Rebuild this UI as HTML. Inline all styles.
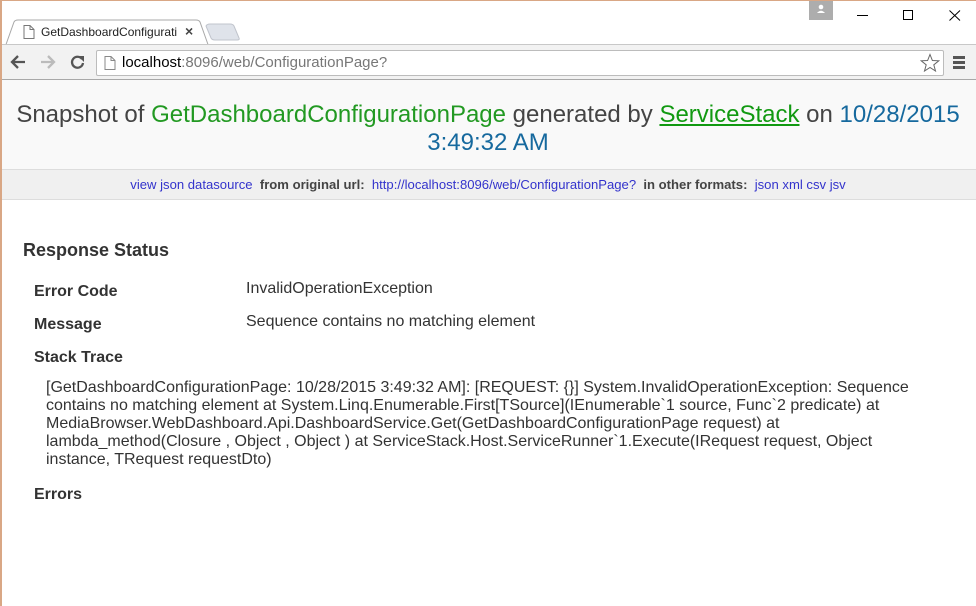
<!DOCTYPE html>
<html><head><meta charset="utf-8"><style>
*{margin:0;padding:0;box-sizing:border-box}
body{width:976px;height:606px;overflow:hidden;background:#fff;font-family:"Liberation Sans",Arial,sans-serif;position:relative;color:#333}
.abs{position:absolute}
#frame{position:absolute;left:0;top:0;width:976px;height:606px;border-top:1px solid #d9a785;border-left:2px solid #d9a785;pointer-events:none}
#chrome{position:absolute;left:0;top:0;width:976px;height:80px;background:#fff}
#tb{position:absolute;left:0;top:44px;width:976px;height:36px;background:#f2f2f2;border-top:1px solid #c8c8c8;border-bottom:1px solid #a8a8a8}
#url{position:absolute;left:96px;top:50px;width:848px;height:26px;background:#fff;border:1px solid #bcbcbc;border-radius:2px}
#hdr{position:absolute;left:0;top:80px;width:976px;height:89px;background:#f9f9f9;text-align:center;font-size:24px;line-height:28px;color:#444;padding-top:21px;white-space:nowrap}
#bar{position:absolute;left:0;top:169px;width:976px;height:31px;background:#f0f0f0;border-top:1px solid #ddd;border-bottom:1px solid #ddd;text-align:center;font-size:13.1px;line-height:29px;color:#444;font-weight:bold;white-space:nowrap}
#bar a{color:#3333cc;font-weight:normal;text-decoration:none}
.lbl{position:absolute;left:34px;font-weight:bold;font-size:16px;color:#333}
.val{position:absolute;left:246px;font-size:16px;color:#333}
</style></head><body>
<div id="chrome"></div>
<svg class="abs" style="left:0;top:18px" width="240" height="28">
<path d="M0 26.5 H6 L14 4 Q15 2 18 2 H196 Q199 2 200 4 L208 26.5" fill="#fff" stroke="#a8a8a8"/>
<path d="M206 8 Q207 6 210 6 H230 Q233 6 234 8 L239 20 Q240 22 237 22 H215 Q212 22 211 20 Z" fill="#dfe3ea" stroke="#c0c4cc"/>
</svg>
<svg class="abs" style="left:23px;top:25px" width="12" height="14"><path d="M1 .5H7L11 4.5V13.5H1Z M7 .5V4.5H11" fill="#fff" stroke="#777"/></svg>
<div class="abs" style="left:41px;top:25px;font-size:12px;color:#222;width:140px;overflow:hidden;white-space:nowrap">GetDashboardConfigurati</div>
<div class="abs" style="left:185px;top:23px;font-size:14px;color:#444;font-weight:bold">×</div>
<div class="abs" style="left:809px;top:0;width:24px;height:20px;background:#adadad"></div>
<svg class="abs" style="left:815px;top:3px" width="12" height="12"><circle cx="6" cy="4" r="2.3" fill="#fff"/><path d="M2 10 Q6 5.5 10 10Z" fill="#fff"/></svg>
<div class="abs" style="left:857px;top:15px;width:11px;height:1px;background:#000"></div>
<div class="abs" style="left:903px;top:10px;width:10px;height:10px;border:1px solid #000"></div>
<svg class="abs" style="left:949px;top:10px" width="12" height="11"><path d="M.5 .5L11 10.5M11 .5L.5 10.5" stroke="#000"/></svg>
<div id="tb"></div>
<svg class="abs" style="left:10px;top:54px" width="80" height="16">
<path d="M2 8H15M8 2L2 8L8 14" stroke="#555" stroke-width="2.3" fill="none"/>
<path d="M31 8H44M38 2L44 8L38 14" stroke="#bbb" stroke-width="2.3" fill="none"/>
<path d="M72 5A5.5 5.5 0 1 0 73 9" stroke="#555" stroke-width="2.3" fill="none"/><path d="M68 2H74V8Z" fill="#555"/>
</svg>
<div id="url"></div>
<svg class="abs" style="left:104px;top:56px" width="12" height="14"><path d="M1 .5H7L11 4.5V13.5H1Z M7 .5V4.5H11" fill="#fff" stroke="#888"/></svg>
<div class="abs" style="left:122px;top:54px;font-size:15px;color:#777"><span style="color:#000">localhost</span>:8096/web/ConfigurationPage?</div>
<svg class="abs" style="left:920px;top:53px" width="20" height="20"><path d="M10 1.5L12.4 7.5L18.8 7.8L13.8 11.8L15.5 18L10 14.5L4.5 18L6.2 11.8L1.2 7.8L7.6 7.5Z" fill="#fff" stroke="#666"/></svg>
<div class="abs" style="left:953px;top:56px;width:12px;height:3px;background:#555;box-shadow:0 5px 0 #555,0 10px 0 #555"></div>

<div id="hdr">Snapshot of <span style="color:#229922">GetDashboardConfigurationPage</span> generated by <span style="color:#119911;text-decoration:underline">ServiceStack</span> on <span style="color:#16699e">10/28/2015<br>3:49:32 AM</span></div>
<div id="bar"><a>view json datasource</a> &nbsp;from original url:&nbsp; <a>http://localhost:8096/web/ConfigurationPage?</a> &nbsp;in other formats:&nbsp; <a>json</a> <a>xml</a> <a>csv</a> <a>jsv</a></div>

<div class="abs" style="left:23px;top:240px;font-size:18px;font-weight:bold;color:#333">Response Status</div>
<div class="lbl" style="top:283px">Error Code</div><div class="val" style="top:280px">InvalidOperationException</div>
<div class="lbl" style="top:316px">Message</div><div class="val" style="top:313px">Sequence contains no matching element</div>
<div class="lbl" style="top:349px">Stack Trace</div>
<div class="abs" style="left:46px;top:379px;width:880px;font-size:16px;line-height:18px;color:#333">[GetDashboardConfigurationPage: 10/28/2015 3:49:32 AM]: [REQUEST: {}] System.InvalidOperationException: Sequence contains no matching element at System.Linq.Enumerable.First[TSource](IEnumerable`1 source, Func`2 predicate) at MediaBrowser.WebDashboard.Api.DashboardService.Get(GetDashboardConfigurationPage request) at lambda_method(Closure , Object , Object ) at ServiceStack.Host.ServiceRunner`1.Execute(IRequest request, Object instance, TRequest requestDto)</div>
<div class="lbl" style="top:486px">Errors</div>
<div id="frame"></div>
</body></html>
